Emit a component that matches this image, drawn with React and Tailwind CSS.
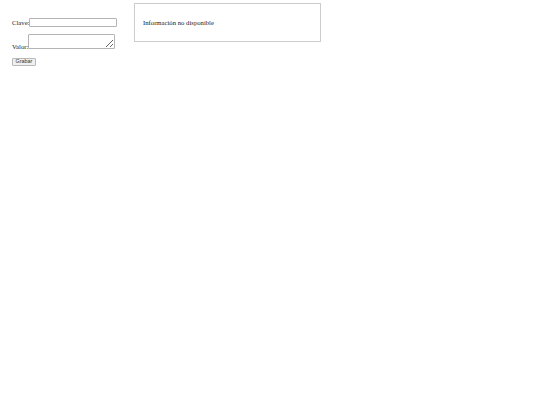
import React from "react";

const serif = { fontFamily: '"Liberation Serif", serif' };

export default function App() {
  return (
    <div
      className="flex items-start pl-[12px] pt-[3px] text-[6.7px] text-[#222] bg-white min-h-[405px]"
      style={serif}
    >
      <form className="flex flex-col w-[122px] pt-[15px]">
        <div className="flex items-end">
          <span className="leading-[8px]">Clave:</span>
          <input
            type="text"
            className="w-[88px] h-[9px] border border-[#b4b4b4] rounded-[1px] bg-white outline-none"
          />
        </div>
        <div className="flex items-end mt-[7px]">
          <span className="leading-[6px] translate-y-[1px]">Valor:</span>
          <textarea className="w-[87px] h-[15px] border border-[#b4b4b4] rounded-[1px] bg-white resize outline-none" />
        </div>
        <div className="mt-[9px]">
          <button
            type="button"
            className="w-[24px] h-[8px] flex items-center justify-center border border-[#b8b8b8] rounded-[1px] bg-[#f0f0f0] text-[5.4px] text-[#333] leading-none"
            style={{ fontFamily: '"Liberation Sans", sans-serif' }}
          >
            Grabar
          </button>
        </div>
      </form>
      <div className="w-[187px] h-[39px] border border-[#cccccc] flex items-center pl-[8px] pt-[1px]">
        <span>Información no disponible</span>
      </div>
    </div>
  );
}
